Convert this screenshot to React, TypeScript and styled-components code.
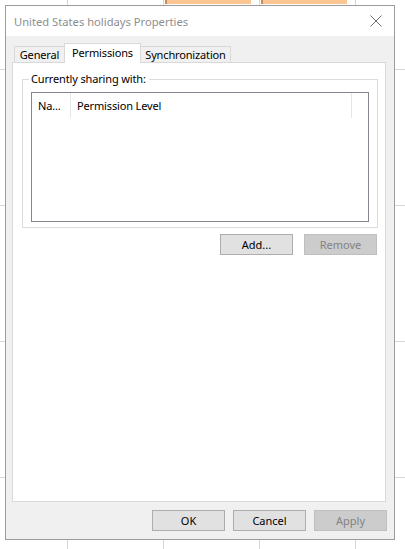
import React from "react";
import styled, { createGlobalStyle } from "styled-components";

const Global = createGlobalStyle`
  html, body { margin: 0; padding: 0; background: #ffffff; }
  body { width: 405px; height: 549px; overflow: hidden; font-family: "Noto Sans", "Liberation Sans", sans-serif; }
  #root { width: 405px; height: 549px; }
`;

const Page = styled.div`
  position: relative;
  width: 405px;
  height: 549px;
  overflow: hidden;
  background: #ffffff;
`;

const Calendar = styled.div`
  position: absolute;
  inset: 0;
  display: grid;
  grid-template-columns: 68px repeat(4, 96px) 1fr;
  grid-template-rows: 70px repeat(4, 136px) 1fr;
`;

const Cell = styled.div`
  border-right: 1px solid #d6d6d6;
  border-bottom: 1px solid #d6d6d6;
  box-sizing: border-box;
`;

const Event = styled.div<{ $left: number }>`
  position: absolute;
  top: -2px;
  left: ${(p) => p.$left}px;
  width: 86px;
  height: 6px;
  background: #fbc592;
  border-left: 2px solid #d08a50;
  box-sizing: border-box;
`;

const Dialog = styled.div`
  position: absolute;
  left: 5px;
  top: 5px;
  width: 390px;
  height: 535px;
  box-sizing: border-box;
  border: 1px solid #9b9b9b;
  background: #f0f0f0;
  display: flex;
  flex-direction: column;
  font-size: 11px;
  letter-spacing: -0.15px;
  color: #000;
`;

const TitleBar = styled.div`
  height: 30px;
  background: #ffffff;
  display: flex;
  align-items: center;
  justify-content: space-between;
  padding: 0 9px 0 8px;
  flex: none;
`;

const Title = styled.span`
  color: #8e8e8e;
  font-size: 11.2px;
  letter-spacing: 0;
`;

const CloseIcon = styled.svg`
  width: 12px;
  height: 12px;
  margin-right: 3px;
`;

const Body = styled.div`
  flex: 1;
  display: flex;
  flex-direction: column;
  padding: 7px 0 0 6px;
`;

const TabStrip = styled.div`
  display: flex;
  align-items: flex-end;
  height: 20px;
  padding-left: 2px;
  position: relative;
  z-index: 1;
`;

const Tab = styled.div<{ $active?: boolean; $w: number }>`
  box-sizing: border-box;
  width: ${(p) => p.$w}px;
  height: ${(p) => (p.$active ? 20 : 17)}px;
  border: 1px solid #d9d9d9;
  border-bottom: ${(p) => (p.$active ? "none" : "1px solid #d9d9d9")};
  background: ${(p) => (p.$active ? "#ffffff" : "#f0f0f0")};
  margin-left: ${(p) => (p.$active ? "-1px" : "0")};
  margin-right: ${(p) => (p.$active ? "-1px" : "0")};
  display: flex;
  align-items: center;
  justify-content: center;
  padding-bottom: ${(p) => (p.$active ? 3 : 0)}px;
  position: relative;
  z-index: ${(p) => (p.$active ? 2 : 1)};
`;

const Panel = styled.div`
  box-sizing: border-box;
  width: 374px;
  height: 440px;
  margin-top: -1px;
  border: 1px solid #d9d9d9;
  background: #ffffff;
  padding: 16px 7px 0 9px;
  display: flex;
  flex-direction: column;
`;

const Group = styled.div`
  position: relative;
  box-sizing: border-box;
  width: 356px;
  height: 149px;
  border: 1px solid #dcdcdc;
  padding: 12px 8px 5px 8px;
  display: flex;
  flex-direction: column;
`;

const Legend = styled.span`
  position: absolute;
  left: 6px;
  top: -9px;
  padding: 0 3px 0 2px;
  background: #ffffff;
  line-height: 16px;
`;

const ListView = styled.div`
  box-sizing: border-box;
  flex: 1;
  border: 1px solid #828790;
  background: #fff;
`;

const Header = styled.div`
  display: grid;
  grid-template-columns: 39px 281px 1fr;
  height: 25px;
`;

const HeaderCell = styled.div`
  display: flex;
  align-items: center;
  padding-left: 6px;
  border-right: 1px solid #e5e5e5;
  &:last-child { border-right: none; }
`;

const ButtonRow = styled.div<{ $gap: number }>`
  display: flex;
  justify-content: flex-end;
  gap: ${(p) => p.$gap}px;
`;

const Button = styled.button`
  box-sizing: border-box;
  width: 73px;
  height: 21px;
  padding: 0;
  background: #e1e1e1;
  border: 1px solid #adadad;
  font-family: inherit;
  font-size: 11px;
  letter-spacing: 0;
  color: #000;
  &:disabled {
    background: #cccccc;
    border-color: #bfbfbf;
    color: #838383;
  }
`;

const PanelButtons = styled(ButtonRow)`
  margin-top: 6px;
  width: 355px;
`;

const Footer = styled(ButtonRow)`
  margin-top: 8px;
  padding-right: 7px;
`;

export default function App() {
  const cells = Array.from({ length: 36 });
  return (
    <>
      <Global />
      <Page>
        <Calendar>
          {cells.map((_, i) => (
            <Cell key={i} />
          ))}
        </Calendar>
        <Event $left={165} />
        <Event $left={261} />
        <Dialog>
          <TitleBar>
            <Title>United States holidays Properties</Title>
            <CloseIcon viewBox="0 0 12 12">
              <path d="M0.5 0.5 L11.5 11.5 M11.5 0.5 L0.5 11.5" stroke="#6f6f6f" strokeWidth="1" fill="none" />
            </CloseIcon>
          </TitleBar>
          <Body>
            <TabStrip>
              <Tab $w={51}>General</Tab>
              <Tab $w={77} $active>Permissions</Tab>
              <Tab $w={91}>Synchronization</Tab>
            </TabStrip>
            <Panel>
              <Group>
                <Legend>Currently sharing with:</Legend>
                <ListView>
                  <Header>
                    <HeaderCell>Na...</HeaderCell>
                    <HeaderCell>Permission Level</HeaderCell>
                    <HeaderCell />
                  </Header>
                </ListView>
              </Group>
              <PanelButtons $gap={11}>
                <Button>Add...</Button>
                <Button disabled>Remove</Button>
              </PanelButtons>
            </Panel>
            <Footer $gap={8}>
              <Button>OK</Button>
              <Button>Cancel</Button>
              <Button disabled>Apply</Button>
            </Footer>
          </Body>
        </Dialog>
      </Page>
    </>
  );
}
